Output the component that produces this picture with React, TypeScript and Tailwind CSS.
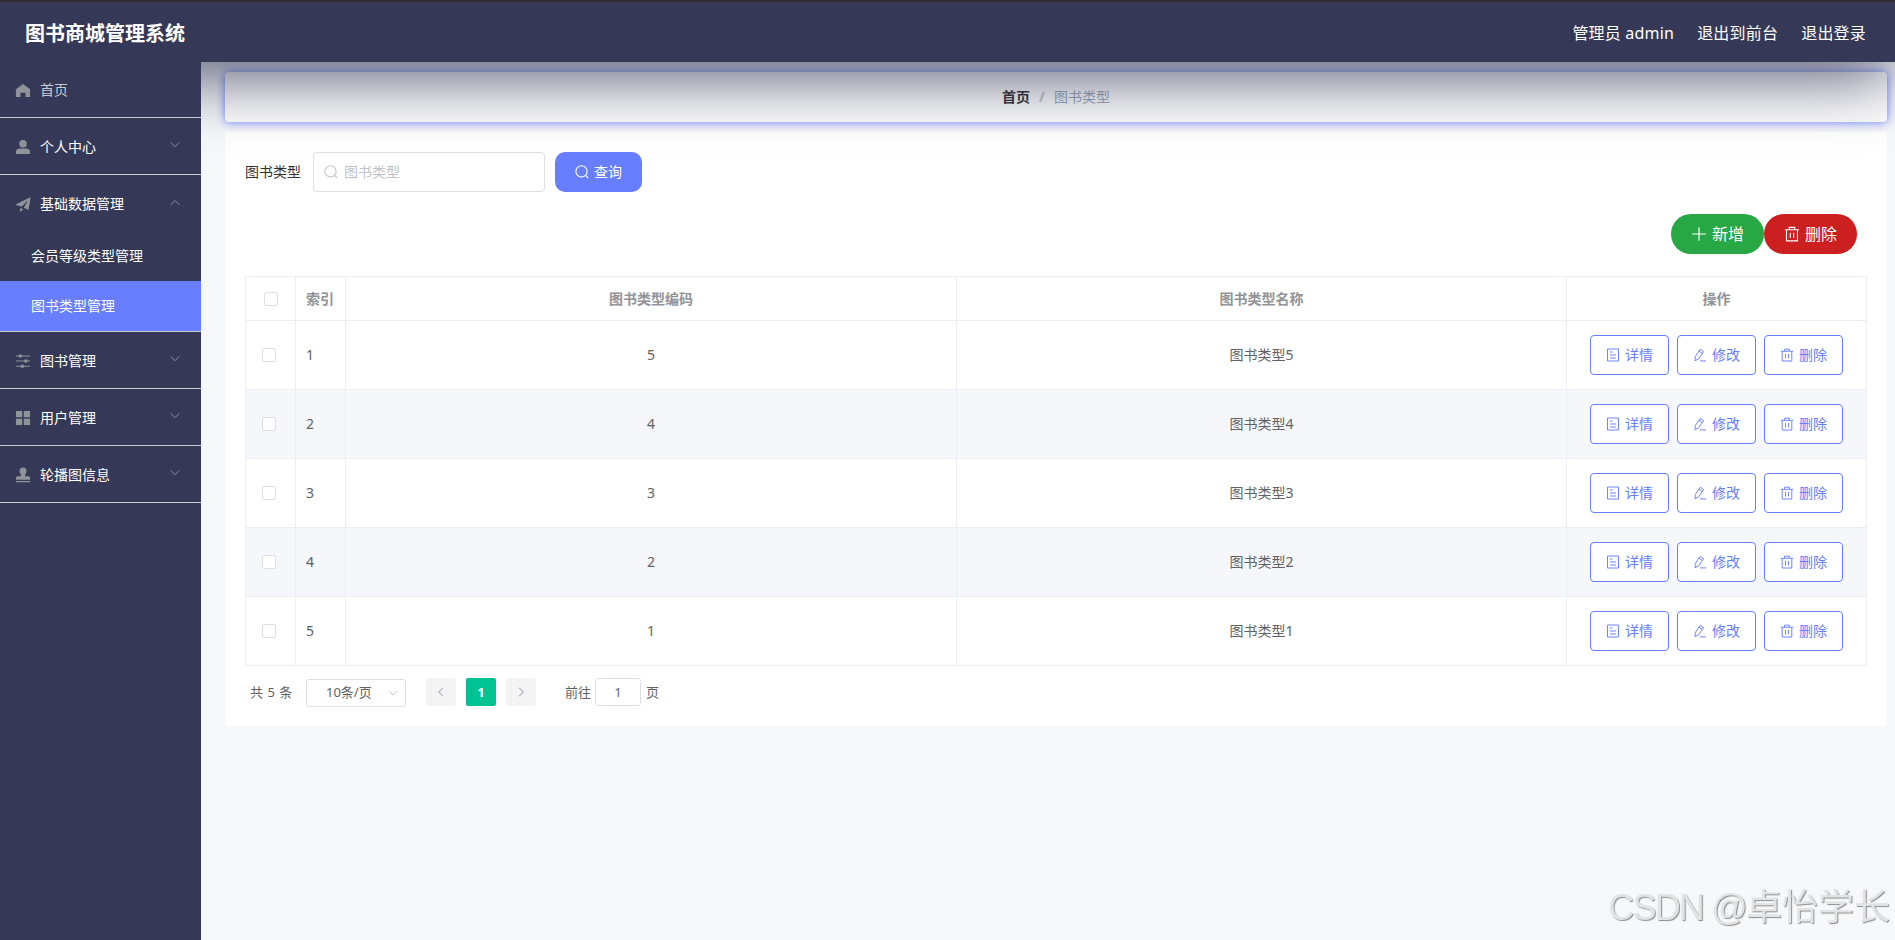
import { useState } from 'react'
import type { ReactNode } from 'react'

interface BookType {
  index: number
  code: number
  name: string
}

const ROWS: BookType[] = [
  { index: 1, code: 5, name: '图书类型5' },
  { index: 2, code: 4, name: '图书类型4' },
  { index: 3, code: 3, name: '图书类型3' },
  { index: 4, code: 2, name: '图书类型2' },
  { index: 5, code: 1, name: '图书类型1' },
]

// Solid icons, 1024 grid
const P = {
  home: 'M512 120 60 460v504h290V690h324v274h290V460z',
  user: 'M512 60a240 240 0 1 1 0 480 240 240 0 0 1 0-480zM300 600h424c150 0 240 90 240 220v144H60V820c0-130 90-220 240-220z',
  promotion: 'M10 560 1010 60 860 900 560 750 830 270 420 680zM330 765l200 90-200 165z',
  menu: 'M60 60h400v400H60zM564 60h400v400H564zM60 564h400v400H60zM564 564h400v400H564z',
  stamp: 'M512 30a225 225 0 0 1 225 225c0 130-100 180-100 330h200c70 0 127 60 127 130v100H60V715c0-70 57-130 127-130h200c0-150-100-200-100-330A225 225 0 0 1 512 30zM60 890h904v80H60z',
}

function Solid({ d }: { d: string }) {
  return (
    <svg viewBox="0 0 1024 1024" className="w-4 h-4 shrink-0 fill-[#909399]">
      <path d={d} />
    </svg>
  )
}

function Line({ size, children }: { size: number; children: ReactNode }) {
  return (
    <svg width={size} height={size} viewBox="0 0 14 14" fill="none" stroke="currentColor" className="shrink-0">
      {children}
    </svg>
  )
}

function OperationIcon() {
  return (
    <svg viewBox="0 0 16 16" className="w-4 h-4 shrink-0 fill-[#909399]">
      <path d="M1 2.5h14v1H1zM1 7.5h14v1H1zM1 12.7h14v1H1z" />
      <circle cx="5.3" cy="3" r="1.8" />
      <circle cx="10.8" cy="8" r="1.8" />
      <circle cx="7.3" cy="13.2" r="1.8" />
    </svg>
  )
}

const SearchIcon = () => (
  <Line size={14}>
    <circle cx="6.5" cy="6.4" r="5.6" strokeWidth="1.1" />
    <path d="m10.4 10.4 2.9 2.7" strokeWidth="1.2" />
  </Line>
)

const DeleteIcon = ({ size = 14 }: { size?: number }) => (
  <Line size={size}>
    <path d="M.8 3.3h12.4M4.6 3V1.2h4.8V3M2.2 3.5v9.5h9.6V3.5M5.5 6v4.5M8.5 6v4.5" strokeWidth="0.95" />
  </Line>
)

const DetailIcon = () => (
  <Line size={14}>
    <path d="M1.5 1h11v12h-11zM4 4h2.5M4 7h6M4 10h6" strokeWidth="0.95" />
  </Line>
)

const EditIcon = () => (
  <Line size={14}>
    <path d="m2.3 8.5 4.9-7.2 3.4 2.3-4.9 7.2L2 12.7zM6 3.1l3.4 2.3M7 12.9h6" strokeWidth="0.95" />
  </Line>
)

function Chevron({ up }: { up?: boolean }) {
  return (
    <svg width="12" height="12" viewBox="0 0 12 12" fill="none" stroke="#909399" className="mr-5 mb-1">
      <path d={up ? 'm1.7 8.8 4.3-4.3 4.3 4.3' : 'm1.7 3.4 4.3 4.3 4.3-4.3'} />
    </svg>
  )
}

interface MenuProps {
  icon: ReactNode
  label: string
  up?: boolean
}

function MenuTitle({ icon, label, up }: MenuProps) {
  return (
    <div className="h-14 flex items-center pt-0.5 pl-[15px] text-white">
      {icon}
      <span className="ml-[9px] flex-1">{label}</span>
      <Chevron up={up} />
    </div>
  )
}

function Checkbox() {
  const [checked, setChecked] = useState(false)
  return (
    <button
      onClick={() => setChecked(!checked)}
      className={`block w-3.5 h-3.5 rounded-[2px] border border-[#dcdfe6] ${checked ? 'bg-[#667eff]' : 'bg-white'}`}
    />
  )
}

function RowButton({ icon, label }: { icon: ReactNode; label: string }) {
  return (
    <button className="w-[79px] h-10 flex items-center justify-center gap-[5px] rounded border border-[#667eff] bg-white text-[#667eff]">
      {icon}
      {label}
    </button>
  )
}

const GRID = 'grid grid-cols-[50px_50px_611px_610px_300px]'
const CELL = 'flex items-center border-r border-b border-[#ebeef5]'

export default function App() {
  const [keyword, setKeyword] = useState('')
  const [page, setPage] = useState('1')

  return (
    <div className="w-[1895px] h-[940px] overflow-hidden flex flex-col bg-[#f7f8fa] text-sm text-[#606266] font-['Noto_Sans','Noto_Sans_CJK_SC',sans-serif]">
      {/* Header */}
      <header className="relative z-10 h-[62px] shrink-0 border-t-2 border-[#2e2e33] bg-[#353957] shadow-[0_10px_70px_#353957] flex items-center pt-[3px] pl-[25px] pr-[29px] text-base text-white pointer-events-none">
        <h1 className="text-xl font-bold flex-1">图书商城管理系统</h1>
        <div className="flex gap-[23px] pb-0.5 tracking-[0.2px]">
          <span>管理员 admin</span>
          <span>退出到前台</span>
          <span>退出登录</span>
        </div>
      </header>

      <div className="flex flex-1">
        {/* Sidebar */}
        <aside className="relative z-20 w-[201px] shrink-0 bg-[#353957]">
          <div className="h-14 flex items-center pl-[15px] border-b border-[#ccc] text-[#c8c9d0]">
            <Solid d={P.home} />
            <span className="ml-[9px]">首页</span>
          </div>
          <div className="border-b border-[#ccc]">
            <MenuTitle icon={<Solid d={P.user} />} label="个人中心" />
          </div>
          <div className="border-b border-[#ccc]">
            <MenuTitle icon={<Solid d={P.promotion} />} label="基础数据管理" up />
            <div className="h-[50px] flex items-center pl-[31px] text-white">会员等级类型管理</div>
            <div className="h-[50px] flex items-center pl-[31px] text-white bg-[#667eff]">图书类型管理</div>
          </div>
          <div className="border-b border-[#ccc]">
            <MenuTitle icon={<OperationIcon />} label="图书管理" />
          </div>
          <div className="border-b border-[#ccc]">
            <MenuTitle icon={<Solid d={P.menu} />} label="用户管理" />
          </div>
          <div className="border-b border-[#ccc]">
            <MenuTitle icon={<Solid d={P.stamp} />} label="轮播图信息" />
          </div>
        </aside>

        <main className="flex-1 pl-6 pr-2 pt-2.5">
          {/* Breadcrumb */}
          <nav className="h-[50px] rounded bg-white shadow-[0_0_10px_#667eff] flex items-center justify-center">
            <span className="font-bold text-[#303133]">首页</span>
            <span className="mx-[9px] font-bold text-[#c0c4cc]">/</span>
            <span className="text-[#97a8be]">图书类型</span>
          </nav>

          <section className="relative mt-2.5 h-[594px] bg-white px-5 pt-5">
            {/* Search */}
            <div className="flex items-center h-10">
              <label className="text-[#303133] mr-3">图书类型</label>
              <div className="w-[232px] h-10 flex items-center gap-1.5 rounded border border-[#dcdfe6] bg-white pl-2.5 text-[#c0c4cc]">
                <SearchIcon />
                <input
                  value={keyword}
                  onChange={e => setKeyword(e.target.value)}
                  placeholder="图书类型"
                  className="w-44 outline-none text-[#606266] placeholder:text-[#c0c4cc]"
                />
              </div>
              <button className="ml-2.5 w-[87px] h-10 flex items-center justify-center gap-[5px] rounded-[10px] bg-[#667eff] text-white">
                <SearchIcon />
                查询
              </button>
            </div>

            {/* Actions */}
            <div className="mt-[22px] mr-2.5 flex justify-end text-base text-white">
              <button className="w-[93px] h-10 flex items-center justify-center gap-[5px] rounded-[20px] bg-[#28a745]">
                <Line size={16}>
                  <path d="M1 7h12M7 1v12" />
                </Line>
                新增
              </button>
              <button className="w-[93px] h-10 flex items-center justify-center gap-[5px] rounded-[20px] bg-[#cc1f1f]">
                <DeleteIcon size={16} />
                删除
              </button>
            </div>

            {/* Table */}
            <div className="mt-[22px] w-[1622px] border-t border-l border-[#ebeef5]">
              <div className={`${GRID} h-11 font-bold text-[#909399]`}>
                <div className={`${CELL} justify-center`}><Checkbox /></div>
                <div className={`${CELL} pl-2.5`}>索引</div>
                <div className={`${CELL} justify-center`}>图书类型编码</div>
                <div className={`${CELL} justify-center`}>图书类型名称</div>
                <div className={`${CELL} justify-center`}>操作</div>
              </div>
              {ROWS.map((row, i) => (
                <div key={row.index} className={`${GRID} h-[69px] ${i % 2 ? 'bg-[#f5f7fa]' : 'bg-white'}`}>
                  <div className={`${CELL} pl-4`}><Checkbox /></div>
                  <div className={`${CELL} pl-2.5`}>{row.index}</div>
                  <div className={`${CELL} justify-center`}>{row.code}</div>
                  <div className={`${CELL} justify-center`}>{row.name}</div>
                  <div className={`${CELL} justify-center gap-2`}>
                    <RowButton icon={<DetailIcon />} label="详情" />
                    <RowButton icon={<EditIcon />} label="修改" />
                    <RowButton icon={<DeleteIcon />} label="删除" />
                  </div>
                </div>
              ))}
            </div>

            {/* Pagination */}
            <div className="mt-3 ml-[5px] h-7 flex items-center text-[13px]">
              <span className="w-14 [word-spacing:1px]">共 5 条</span>
              <div className="w-[100px] h-7 mt-0.5 flex items-center rounded-[3px] border border-[#dcdfe6] pl-[19px] pr-[7px]">
                <span className="flex-1 pb-0.5">10条/页</span>
                <svg width="10" height="10" viewBox="0 0 10 10" fill="none" stroke="#c0c4cc">
                  <path d="m1 3 4 4 4-4" />
                </svg>
              </div>
              <button className="ml-5 w-[30px] h-7 flex items-center justify-center rounded-[2px] bg-[#f4f4f5]">
                <svg width="12" height="12" viewBox="0 0 12 12" fill="none" stroke="#c0c4cc" strokeWidth="1.6">
                  <path d="M8 1.8 3.8 6 8 10.2" />
                </svg>
              </button>
              <button className="ml-2.5 w-[30px] h-7 rounded-[2px] bg-[#00c292] font-bold text-white">1</button>
              <button className="ml-2.5 w-[30px] h-7 flex items-center justify-center rounded-[2px] bg-[#f4f4f5]">
                <svg width="12" height="12" viewBox="0 0 12 12" fill="none" stroke="#c0c4cc" strokeWidth="1.6">
                  <path d="M4 1.8 8.2 6 4 10.2" />
                </svg>
              </button>
              <span className="ml-[29px]">前往</span>
              <input
                value={page}
                onChange={e => setPage(e.target.value)}
                className="ml-1 mr-[5px] w-[46px] h-7 rounded-[3px] border border-[#dcdfe6] text-center outline-none"
              />
              <span>页</span>
            </div>
          </section>
        </main>
      </div>

      {/* Watermark */}
      <div className="fixed right-[5px] bottom-[6px] whitespace-nowrap text-[36px] leading-[52px] text-[#e2e3e4] [text-shadow:1px_1px_1px_#8c8c8c] font-['Liberation_Sans','Noto_Sans_CJK_SC',sans-serif]">
        <span className="tracking-[-1.8px]">CSDN @</span>卓怡学长
      </div>
    </div>
  )
}
